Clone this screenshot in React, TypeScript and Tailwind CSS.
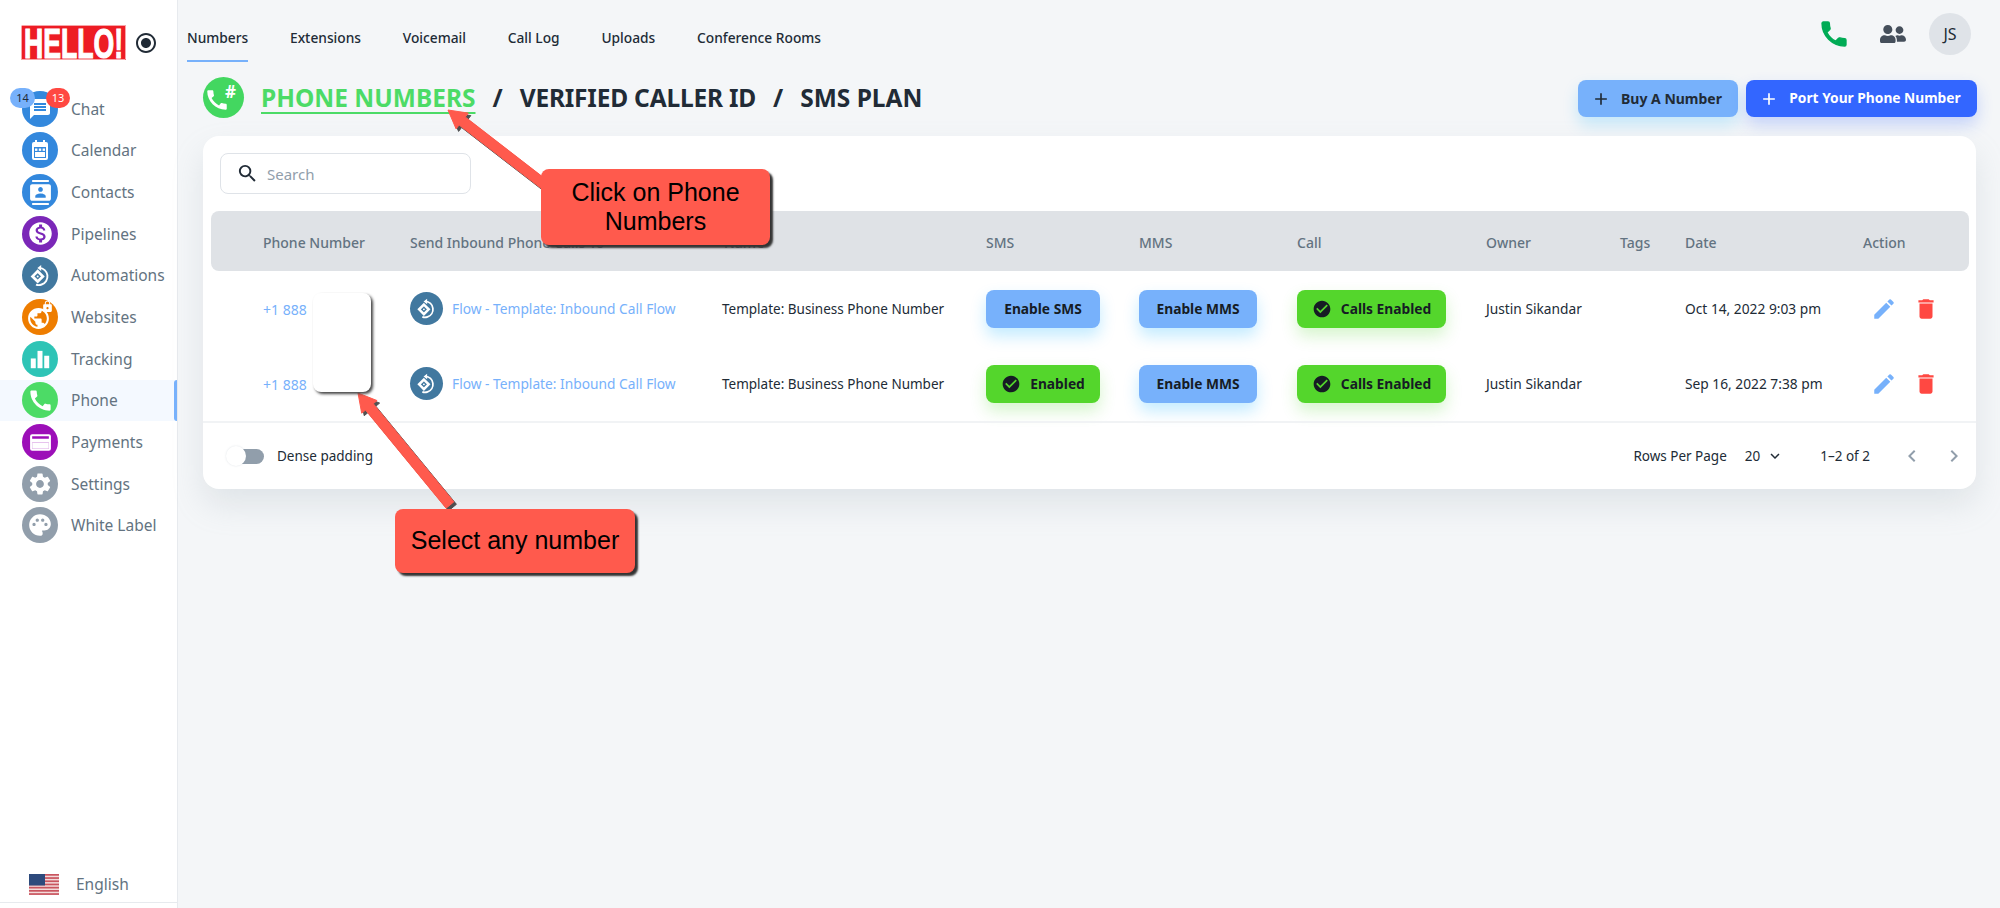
import type { ReactNode } from "react";
import { FaUserFriends } from "react-icons/fa";
import {
  MdAdd,
  MdCall,
  MdCheckCircle,
  MdChevronLeft,
  MdChevronRight,
  MdContacts,
  MdDelete,
  MdEdit,
  MdExpandMore,
  MdLock,
  MdMessage,
  MdMonetizationOn,
  MdPalette,
  MdPublic,
  MdRadioButtonChecked,
  MdSearch,
  MdSettings,
} from "react-icons/md";

function CalendarIcon() {
  return (
    <svg viewBox="0 0 24 24" className="w-[24px] h-[24px]" fill="white">
      <path d="M7 2h2v2h6V2h2v2h1a2 2 0 0 1 2 2v14a2 2 0 0 1-2 2H6a2 2 0 0 1-2-2V6a2 2 0 0 1 2-2h1z" />
      <rect x="6" y="9" width="12" height="11" fill="#3388dd" />
      <rect x="7" y="10.5" width="2.4" height="2.4" />
      <rect x="10.8" y="10.5" width="2.4" height="2.4" />
      <rect x="14.6" y="10.5" width="2.4" height="2.4" />
      <rect x="7" y="14" width="10" height="5" />
    </svg>
  );
}

function FlowIcon({ className }: { className: string }) {
  return (
    <svg viewBox="0 0 24 24" className={className} fill="none" stroke="white">
      <path d="M9.5 8.2l4.6 4.6-4.6 4.6-4.6-4.6z" strokeWidth="2.4" />
      <circle cx="9.5" cy="12.8" r="0.9" fill="white" stroke="none" />
      <path d="M11 5.2a7.6 7.6 0 0 1 2 14.8 7 7 0 0 1-5 .1" strokeWidth="1.7" />
      <path d="M12.6 2.6L9.2 5.3l3.4 2.6z" fill="white" stroke="none" />
    </svg>
  );
}

function CardIcon() {
  return (
    <svg viewBox="0 0 24 24" className="w-[25px] h-[25px]" fill="white">
      <path d="M4 4h16a2 2 0 0 1 2 2v12a2 2 0 0 1-2 2H4a2 2 0 0 1-2-2V6a2 2 0 0 1 2-2zm0 2v2.5h16V6zm0 6v6h16v-6z" />
      <rect x="4" y="12" width="16" height="6" />
    </svg>
  );
}

function BarsIcon() {
  return (
    <svg viewBox="0 0 24 24" className="w-[26px] h-[26px]" fill="white">
      <rect x="3.5" y="11.5" width="4.6" height="9" />
      <rect x="9.7" y="4.5" width="4.6" height="16" />
      <rect x="15.9" y="9" width="4.6" height="11.5" />
    </svg>
  );
}

function WebIcon() {
  return (
    <span className="relative block w-[28px] h-[28px]">
      <MdPublic className="w-[25px] h-[25px] text-white absolute left-0 bottom-0" />
      <MdLock className="w-[13px] h-[13px] text-white absolute right-0 top-[-3px]" />
    </span>
  );
}

function BoldPhone() {
  return (
    <svg viewBox="0 0 24 24" className="ml-auto mt-[18px] w-[32px] h-[32px]" fill="#00ab55" stroke="#00ab55" strokeWidth="1" strokeLinejoin="round">
      <path d="M6.62 10.79c1.44 2.83 3.76 5.14 6.59 6.59l2.2-2.2c.27-.27.67-.36 1.02-.24 1.12.37 2.33.57 3.57.57.55 0 1 .45 1 1V20c0 .55-.45 1-1 1-9.39 0-17-7.61-17-17 0-.55.45-1 1-1h3.5c.55 0 1 .45 1 1 0 1.25.2 2.45.57 3.57.11.35.03.74-.25 1.02l-2.2 2.2z" />
    </svg>
  );
}

const navItems: { label: string; color: string; icon: ReactNode }[] = [
  { label: "Chat", color: "bg-[#3388dd]", icon: <MdMessage className="w-[24px] h-[24px] text-white" /> },
  { label: "Calendar", color: "bg-[#3388dd]", icon: <CalendarIcon /> },
  { label: "Contacts", color: "bg-[#3388dd]", icon: <MdContacts className="w-[25px] h-[25px] text-white" /> },
  { label: "Pipelines", color: "bg-[#7b27b8]", icon: <MdMonetizationOn className="w-[27px] h-[27px] text-white" /> },
  { label: "Automations", color: "bg-[#41789f]", icon: <FlowIcon className="w-[27px] h-[27px]" /> },
  { label: "Websites", color: "bg-[#ee7d00]", icon: <WebIcon /> },
  { label: "Tracking", color: "bg-[#2ec4b6]", icon: <BarsIcon /> },
  { label: "Phone", color: "bg-[#4cdb66]", icon: <MdCall className="w-[27px] h-[27px] text-white" /> },
  { label: "Payments", color: "bg-[#9c0fb8]", icon: <CardIcon /> },
  { label: "Settings", color: "bg-[#919eab]", icon: <MdSettings className="w-[26px] h-[26px] text-white" /> },
  { label: "White Label", color: "bg-[#919eab]", icon: <MdPalette className="w-[26px] h-[26px] text-white" /> },
];

const tabs = ["Numbers", "Extensions", "Voicemail", "Call Log", "Uploads", "Conference Rooms"];

const gridCols = "grid grid-cols-[199px_311px_265px_153px_158px_188px_135px_65px_178px_1fr] items-center";

const rows = [
  { sms: false, date: "Oct 14, 2022 9:03 pm" },
  { sms: true, date: "Sep 16, 2022 7:38 pm" },
];

function Logo() {
  return (
    <svg viewBox="0 0 105 35" className="w-[105px] h-[35px] shrink-0 overflow-visible">
      <rect width="105" height="35" fill="#ed1c24" />
      <rect x="0.5" y="0.5" width="104" height="34" fill="none" stroke="white" strokeWidth="0.6" />
      <text
        x="3"
        y="32.5"
        fontFamily="Liberation Sans, sans-serif"
        fontWeight="700"
        fontSize="42"
        textLength="99"
        lengthAdjust="spacingAndGlyphs"
        fill="white"
        stroke="white"
        strokeWidth="1.2"
      >
        HELLO!
      </text>
    </svg>
  );
}

function Flag() {
  return (
    <svg viewBox="0 0 30 21" className="w-[30px] h-[21px]">
      <rect width="30" height="21" fill="#f3dada" />
      {[0, 3.2, 6.4, 9.6, 12.8, 16, 19.2].map((y) => (
        <rect key={y} y={y} width="30" height="1.7" fill="#c9555f" />
      ))}
      <rect width="16" height="11.5" fill="#2d4a7c" />
    </svg>
  );
}

function Sidebar() {
  return (
    <aside className="w-[178px] shrink-0 h-[908px] bg-white border-r border-[#e7eaee] flex flex-col">
      <div className="flex pl-[21px] pt-[25px] h-[79px] items-start">
        <Logo />
        <MdRadioButtonChecked className="w-[24px] h-[24px] text-[#212b36] ml-[8px] mt-[6px]" />
      </div>
      <nav className="relative flex flex-col mt-[9px]">
        <span className="absolute left-[10px] top-0 z-10 w-[25px] h-[20px] rounded-full bg-[#77b1fb] text-[#212b36] text-[11px] flex items-center justify-center">
          14
        </span>
        <span className="absolute left-[46px] top-0 z-10 w-[24px] h-[20px] rounded-full bg-[#ff4842] text-white text-[11px] flex items-center justify-center">
          13
        </span>
        {navItems.map((item) => (
          <div
            key={item.label}
            className={`relative h-[41.67px] flex items-center pl-[22px] ${item.label === "Phone" ? "bg-[#f4f9ff]" : ""}`}
          >
            <span className={`w-[36px] h-[36px] rounded-full flex items-center justify-center ${item.color}`}>
              {item.icon}
            </span>
            <span className="ml-[13px] pt-[1px] text-[15.5px] text-[#637381]">{item.label}</span>
            {item.label === "Phone" && (
              <span className="absolute right-0 top-0 bottom-0 w-[3px] rounded-l bg-[#77b1fb]" />
            )}
          </div>
        ))}
      </nav>
      <div className="mt-auto h-[36px] mb-[5px] flex items-center pl-[29px] border-b border-[#e7eaee]">
        <Flag />
        <span className="ml-[17px] text-[15.5px] text-[#637381]">English</span>
      </div>
    </aside>
  );
}

function TopBar() {
  return (
    <header className="h-[62px] flex items-start pl-[9px] pr-[29px]">
      {tabs.map((tab, i) => (
        <div
          key={tab}
          className={`h-[62px] pt-[27px] mr-[41.75px] text-[13.75px] leading-[22px] font-medium text-[#212b36] border-b-2 ${i === 0 ? "border-[#77b1fb]" : "border-transparent"}`}
        >
          {tab}
        </div>
      ))}
      <BoldPhone />
      <FaUserFriends className="ml-[30px] mt-[23px] w-[26px] h-[22px] text-[#454f5b]" />
      <div className="ml-[23px] mt-[13px] w-[42px] h-[42px] rounded-full bg-[#dfe3e8] flex items-center justify-center text-[16px] text-[#212b36]">
        JS
      </div>
    </header>
  );
}

function PageHeading() {
  return (
    <div className="h-[74px] flex items-start pl-[25px] pr-[23px]">
      <div className="mt-[15px] w-[41px] h-[41px] rounded-full bg-[#43d760] relative flex items-center justify-center">
        <MdCall className="w-[26px] h-[26px] text-white ml-[-14px] mt-[5px]" />
        <span className="absolute left-[22px] top-[6px] leading-none text-[17px] font-bold text-white">#</span>
      </div>
      <h1 className="ml-[17px] mt-[22px] h-[29px] flex items-center text-[24.5px] font-bold text-[#212b36] leading-none">
        <span className="text-[#4cdb66] underline underline-offset-[5px] decoration-2">PHONE NUMBERS</span>
        <span className="mx-[17px]">/</span>
        <span className="tracking-[-0.2px]">VERIFIED CALLER ID</span>
        <span className="mx-[17px]">/</span>
        <span>SMS PLAN</span>
      </h1>
      <button className="ml-auto mt-[18px] w-[160px] h-[37px] pr-[3px] rounded-lg bg-[#77b1fb] text-[14px] font-bold text-[#212b36] flex items-center justify-center gap-[10px] shadow-[0_8px_16px_rgba(0,171,255,0.2)]">
        <MdAdd className="w-[20px] h-[20px]" />
        Buy A Number
      </button>
      <button className="ml-[8px] mt-[18px] w-[231px] h-[37px] pr-[3px] rounded-lg bg-[#3366ff] text-[13.75px] font-bold text-white flex items-center justify-center gap-[10px] shadow-[0_8px_16px_rgba(51,102,255,0.24)]">
        <MdAdd className="w-[20px] h-[20px]" />
        Port Your Phone Number
      </button>
    </div>
  );
}

function ActionButton({ on, label }: { on: boolean; label: string }) {
  return (
    <button
      className={`w-full h-[38px] pt-[1px] rounded-lg text-[13.75px] font-bold flex items-center justify-center text-[#161c24] ${
        on
          ? "bg-[#54d62c] gap-[9px] shadow-[0_8px_16px_rgba(84,214,44,0.24)]"
          : "bg-[#77b1fb] shadow-[0_8px_16px_rgba(0,171,255,0.24)]"
      }`}
    >
      {on && <MdCheckCircle className="w-[20px] h-[20px]" />}
      {label}
    </button>
  );
}

function PhoneTable() {
  return (
    <section className="mx-0 bg-white rounded-2xl w-[1773px] h-[353px] shadow-[0_16px_32px_rgba(145,158,171,0.2)] flex flex-col">
      <div className="pt-[17px] pl-[17px] h-[75px]">
        <div className="w-[251px] h-[41px] rounded-lg border border-[#dfe3e8] flex items-center pl-[15px]">
          <MdSearch className="w-[23px] h-[23px] text-[#212b36]" />
          <span className="ml-[8px] text-[15px] pt-[2px] text-[#919eab]">Search</span>
        </div>
      </div>
      <div className={`${gridCols} ml-[8px] w-[1758px] h-[60px] pt-[2px] rounded-lg bg-[#dfe2e6] text-[14px] font-medium text-[#637381]`}>
        <span className="pl-[52px]">Phone Number</span>
        <span>Send Inbound Phone Calls To</span>
        <span className="pl-[3px]">Name</span>
        <span>SMS</span>
        <span>MMS</span>
        <span>Call</span>
        <span className="pl-[1px]">Owner</span>
        <span>Tags</span>
        <span>Date</span>
        <span>Action</span>
      </div>
      {rows.map((row) => (
        <div key={row.date} className={`${gridCols} ml-[8px] w-[1758px] h-[75px] text-[13.75px] text-[#212b36]`}>
          <span className="pl-[52px] pt-[1px] text-[14px] text-[#77b1fb]">+1 888</span>
          <div className="flex items-center gap-[9px]">
            <span className="w-[33px] h-[33px] rounded-full bg-[#41789f] flex items-center justify-center">
              <FlowIcon className="w-[25px] h-[25px]" />
            </span>
            <span className="pt-[1px] text-[13.75px] text-[#77b1fb]">Flow - Template: Inbound Call Flow</span>
          </div>
          <span className="pl-[1px] pt-[1px] text-[13.5px]">Template: Business Phone Number</span>
          <div className="w-[114px]">
            <ActionButton on={row.sms} label={row.sms ? "Enabled" : "Enable SMS"} />
          </div>
          <div className="w-[118px]">
            <ActionButton on={false} label="Enable MMS" />
          </div>
          <div className="w-[149px]">
            <ActionButton on label="Calls Enabled" />
          </div>
          <span className="pl-[1px] pt-[1px]">Justin Sikandar</span>
          <span />
          <span className="pt-[1px]">{row.date}</span>
          <div className="flex items-center pl-[8px] gap-[16px]">
            <MdEdit className="w-[26px] h-[26px] text-[#77b1fb]" />
            <MdDelete className="w-[26px] h-[26px] text-[#ff4842]" />
          </div>
        </div>
      ))}
      <div className="border-t-2 border-[#f1f3f5] flex-1 flex items-center pl-[23px] pr-[10px] text-[13.5px] text-[#212b36]">
        <div className="relative w-[38px] h-[20px] flex items-center justify-end">
          <span className="w-[22px] h-[15px] rounded-r-full bg-[#919eab]" />
          <span className="absolute left-0 w-[20px] h-[20px] rounded-full bg-white shadow-[0_0_2px_rgba(145,158,171,0.3)]" />
        </div>
        <span className="ml-[13px]">Dense padding</span>
        <span className="ml-auto">Rows Per Page</span>
        <span className="ml-[18px]">20</span>
        <MdExpandMore className="ml-[6px] w-[18px] h-[18px]" />
        <span className="ml-[36px]">1–2 of 2</span>
        <MdChevronLeft className="ml-[30px] w-[24px] h-[24px] text-[#919eab]" />
        <MdChevronRight className="ml-[18px] w-[24px] h-[24px] text-[#919eab]" />
      </div>
    </section>
  );
}

const arrowOne = "M448 110L468.3 113.1L465.3 117L563 192.6L557 200.6L459.1 125L456.1 128.9Z";
const arrowTwo = "M358 393L377.1 400.6L373.3 403.7L453.9 501.8L446.1 508.2L365.5 410.1L361.7 413.2Z";

function Annotations() {
  return (
    <>
      <svg className="absolute inset-0 z-20 pointer-events-none" width="2000" height="908">
        <g transform="translate(2.5 2.5)" fill="#333" stroke="#333" strokeLinejoin="round" opacity="0.85">
          <path d={arrowOne} strokeWidth="1" />
          <path d={arrowTwo} strokeWidth="1" />
        </g>
        <g fill="#ff5a4d" stroke="#ff5a4d" strokeLinejoin="round">
          <path d={arrowOne} strokeWidth="1" />
          <path d={arrowTwo} strokeWidth="1" />
        </g>
      </svg>
      <div className="absolute z-20 left-[313px] top-[293px] w-[58px] h-[99px] rounded-lg bg-white shadow-[2px_2px_3px_#444]" />
      <div className="absolute z-20 left-[541px] top-[169px] w-[229px] h-[76px] rounded-lg bg-[#ff5a4d] shadow-[3px_3px_2px_#333] flex items-center justify-center text-center font-['Liberation_Sans',sans-serif] text-[25px] leading-[29px] text-black">
        Click on Phone
        <br />
        Numbers
      </div>
      <div className="absolute z-20 left-[395px] top-[509px] w-[240px] h-[64px] rounded-lg bg-[#ff5a4d] shadow-[3px_3px_2px_#333] flex items-center justify-center font-['Liberation_Sans',sans-serif] text-[25px] text-black">
        Select any number
      </div>
    </>
  );
}

export default function App() {
  return (
    <div className="relative flex w-[2000px] h-[908px] overflow-hidden bg-[#f4f6f8] font-['Noto_Sans',sans-serif]">
      <Sidebar />
      <main className="flex-1 flex flex-col">
        <TopBar />
        <PageHeading />
        <div className="pl-[25px]">
          <PhoneTable />
        </div>
      </main>
      <Annotations />
    </div>
  );
}
